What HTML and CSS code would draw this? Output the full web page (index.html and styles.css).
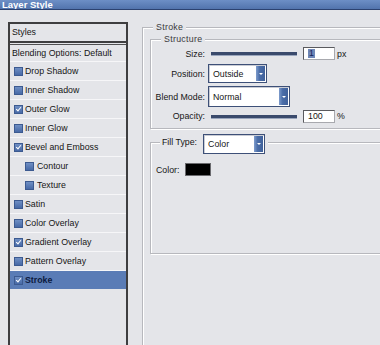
FILE: index.html
```html
<!DOCTYPE html>
<html>
<head>
<meta charset="utf-8">
<link rel="stylesheet" href="styles.css">
</head>
<body>
<div class="titlebar"><span class="title">Layer Style</span></div>
<div class="main">
  <div class="styles-list">
    <div class="list-head">Styles</div>
    <div class="list">
      <div class="row first">Blending Options: Default</div>
      <div class="row"><span class="cb"></span>Drop Shadow</div>
      <div class="row"><span class="cb"></span>Inner Shadow</div>
      <div class="row"><span class="cb on"></span>Outer Glow</div>
      <div class="row"><span class="cb"></span>Inner Glow</div>
      <div class="row"><span class="cb on"></span>Bevel and Emboss</div>
      <div class="row sub"><span class="cb"></span>Contour</div>
      <div class="row sub"><span class="cb"></span>Texture</div>
      <div class="row"><span class="cb"></span>Satin</div>
      <div class="row"><span class="cb"></span>Color Overlay</div>
      <div class="row"><span class="cb on"></span>Gradient Overlay</div>
      <div class="row"><span class="cb"></span>Pattern Overlay</div>
      <div class="row selected"><span class="cb on"></span>Stroke</div>
    </div>
  </div>
  <div class="panel">
    <fieldset class="group stroke-group">
      <legend class="legend-stroke">Stroke</legend>
      <fieldset class="group structure">
        <legend class="legend-structure">Structure</legend>
        <div class="frow size-row">
          <span class="lbl">Size:</span>
          <div class="slider"></div>
          <div class="num"><span class="hl">1</span></div>
          <span class="unit">px</span>
        </div>
        <div class="frow pos-row">
          <span class="lbl">Position:</span>
          <div class="select sel-pos"><span class="sel-text">Outside</span><span class="arrow"></span></div>
        </div>
        <div class="frow blend-row">
          <span class="lbl">Blend Mode:</span>
          <div class="select sel-blend"><span class="sel-text">Normal</span><span class="arrow"></span></div>
        </div>
        <div class="frow op-row">
          <span class="lbl">Opacity:</span>
          <div class="slider"></div>
          <div class="num"><span>100</span></div>
          <span class="unit">%</span>
        </div>
      </fieldset>
      <fieldset class="group filltype">
        <legend class="legend-fill"><span class="fill-lbl">Fill Type:</span><div class="select sel-fill"><span class="sel-text">Color</span><span class="arrow"></span></div></legend>
        <div class="fill-body">
          <div class="color-row"><span>Color:</span><span class="swatch"></span></div>
        </div>
      </fieldset>
    </fieldset>
  </div>
</div>
</body>
</html>
```
FILE: styles.css
```css
html, body {
  margin: 0;
  padding: 0;
}
body {
  width: 380px;
  height: 345px;
  overflow: hidden;
  background: #e4e5e9;
  font-family: "Liberation Sans", Arial, sans-serif;
  font-size: 8.8px;
  color: #151515;
}
.titlebar {
  height: 9px;
  background: linear-gradient(#6d8fc6, #5274ad);
  border-bottom: 1px solid #2c4270;
  overflow: hidden;
}
.title {
  display: block;
  padding-left: 2px;
  line-height: 9px;
  font-size: 9.5px;
  font-weight: bold;
  color: #fff;
}
.main {
  display: flex;
  height: 335px;
  padding-top: 12px;
  box-sizing: border-box;
}
.styles-list {
  margin-left: 8px;
  width: 120px;
  flex: none;
  border-left: 2px solid #3e3e40;
  border-right: 2px solid #3e3e40;
  box-sizing: border-box;
  height: 340px;
}
.list-head {
  border-top: 2px solid #3e3e40;
  border-bottom: 2px solid #3e3e40;
  height: 17px;
  line-height: 17px;
  padding-left: 2px;
}
.list {
  margin-top: 1px;
  border-top: 1px solid #505052;
}
.row {
  display: flex;
  align-items: center;
  height: 18px;
  border-bottom: 1px solid #f6f6f8;
  padding-left: 4px;
  gap: 2px;
}
.row.first {
  height: 16px;
  padding-left: 2px;
}
.row.sub {
  padding-left: 15px;
  gap: 3px;
}
.row.selected {
  background: #5a7cb6;
  color: #0c1a40;
  font-weight: bold;
  border-bottom-color: #e4e5e9;
}
.cb {
  position: relative;
  width: 9px;
  height: 9px;
  box-sizing: border-box;
  border: 1px solid #3c5a90;
  background: linear-gradient(#6f8fc4, #4769a6);
  flex: none;
}
.cb.on::after {
  content: "";
  position: absolute;
  left: 2px;
  top: 0px;
  width: 2px;
  height: 4px;
  border: solid #fff;
  border-width: 0 1.5px 1.5px 0;
  transform: rotate(40deg);
}
.panel {
  margin-left: 14px;
  width: 260px;
  flex: none;
}
.group {
  margin: 0;
  border: 1px solid #b7b8bd;
  box-shadow: inset 1px 1px 0 #fff, 1px 1px 0 #fff;
  min-width: 0;
}
.group legend {
  background: #e4e5e9;
}
.stroke-group {
  padding: 0 0 0 7px;
  height: 360px;
  border-right: none;
}
.legend-stroke {
  margin-left: 3px;
  padding: 0 3px;
  line-height: 10px;
  color: #3a3a3c;
  letter-spacing: 0.3px;
}
.structure {
  margin-top: 2px;
  padding: 0 0 5px 0;
  border-right: none;
}
.legend-structure {
  margin-left: 10px;
  padding: 0 3px;
  line-height: 10px;
  color: #3a3a3c;
  letter-spacing: 0.3px;
}
.frow {
  display: flex;
  align-items: center;
}
.lbl {
  width: 54px;
  text-align: right;
  flex: none;
  margin-right: 3px;
}
.size-row {
  margin-top: 2px;
  height: 15px;
}
.pos-row {
  margin-top: 3px;
  height: 19px;
}
.blend-row {
  margin-top: 3px;
  height: 21px;
}
.op-row {
  margin-top: 2px;
  height: 14px;
}
.slider {
  margin-left: 3px;
  width: 86px;
  height: 3px;
  background: #3a4a6c;
  box-shadow: 0 1px 0 #9aa6bd;
}
.num {
  margin-left: 6px;
  width: 32px;
  height: 13px;
  box-sizing: border-box;
  background: #fff;
  border: 1px solid #5a5a5e;
  border-right-color: #a8a9ae;
  border-bottom-color: #a8a9ae;
  padding-left: 4px;
  display: flex;
  align-items: center;
}
.hl {
  background: #6f87b7;
  color: #14245a;
  padding: 0 1px;
  line-height: 9px;
}
.unit {
  margin-left: 2px;
}
.select {
  position: relative;
  display: flex;
  align-items: center;
  box-sizing: border-box;
  background: #fff;
  border: 1px solid #3d5078;
  box-shadow: inset 1px 1px 0 #c9ccd4;
  padding-left: 4px;
}
.sel-pos { width: 59px; height: 19px; }
.sel-blend { width: 82px; height: 21px; }
.sel-fill { width: 62px; height: 20px; margin-left: 6px; margin-bottom: -4px; align-self: flex-start; }
.sel-text { flex: 1; }
.arrow {
  position: absolute;
  right: 1px;
  top: 1px;
  bottom: 1px;
  width: 9px;
  background: linear-gradient(90deg, #7e9ccc, #4a6da8 40%, #40619b);
}
.arrow::after {
  content: "";
  position: absolute;
  left: 2.5px;
  top: 50%;
  margin-top: -1px;
  border-left: 2px solid transparent;
  border-right: 2px solid transparent;
  border-top: 2px solid #fff;
}
.filltype {
  margin-top: 5px;
  padding: 0;
  border-right: none;
}
.legend-fill {
  display: flex;
  align-items: center;
  height: 16px;
  margin-left: 9px;
  padding: 0 3px 0 2px;
}
.fill-lbl {
  line-height: 16px;
  align-self: flex-start;
}
.fill-body {
  height: 90px;
}
.color-row {
  display: flex;
  align-items: center;
  padding-left: 5px;
  margin-top: 13px;
  gap: 6px;
}
.swatch {
  width: 26px;
  height: 13px;
  box-sizing: border-box;
  background: #000;
  border: 1px solid #6a6a6e;
}
```
